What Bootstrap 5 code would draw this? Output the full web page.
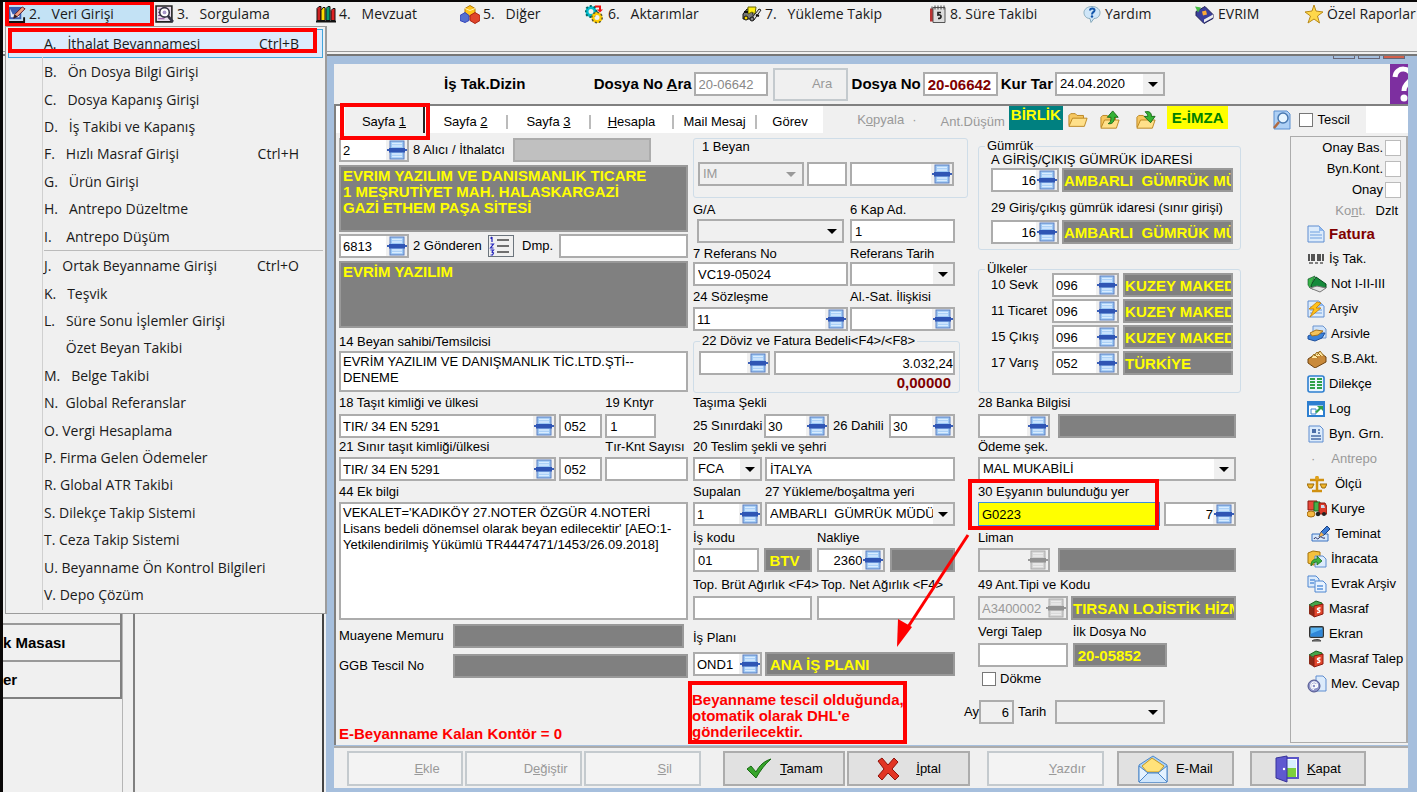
<!DOCTYPE html>
<html lang="tr">
<head>
<meta charset="utf-8">
<meta name="viewport" content="width=device-width, initial-scale=1">
<title>Beyanname Girişi</title>
<link href="https://cdn.jsdelivr.net/npm/bootstrap@5.3.0/dist/css/bootstrap.min.css" rel="stylesheet">
<style>
:root{--face:#f0f0f0;--line:#acacac;--dark:#808080;--frame:#a6bfdd;--mark:#f00}
body{font-family:"Liberation Sans",Arial,sans-serif;font-size:13px;line-height:16px;color:#000;background:var(--face);border-top:2px solid #0a0808;border-left:3px solid #0a0808}
svg{display:block;flex:none}
label,.cap{white-space:nowrap;line-height:16px;display:block}
b,.fw-bold{font-weight:700!important;font-size:15px!important}
button{font-size:13px;line-height:16px}

/* menu bar */
.mainmenu{height:50px;padding-left:3px;display:grid;grid-template-columns:147fr 161fr 144fr 125fr 157fr 187fr 153fr 113fr 109fr 115fr;align-items:start;border-bottom:1px solid #999;font-family:"Open Sans","Noto Sans",sans-serif;font-size:14px}
.mainmenu a{color:#1a1a1a;text-decoration:none;display:flex;gap:3px;align-items:center;height:24px;white-space:pre;padding-left:2px}
.mainmenu a.opened{background:#c3e2f5;outline:4px solid var(--mark);outline-offset:-3px;padding-left:3px}
.dropmenu{position:absolute;left:2px;top:24px;width:322px;height:588px;z-index:20;background:var(--face);border:1px solid #9c9c9c;border-right-width:2px;padding:2px 2px 4px;font-family:"Open Sans","Noto Sans",sans-serif;font-size:14px;display:flex;flex-direction:column}
.dropmenu::before{content:"";position:absolute;left:36px;top:30px;bottom:3px;border-left:1px solid #d0d0d0}
.dropmenu a{flex:1 1 0;display:flex;justify-content:space-between;align-items:center;padding:0 24px 0 36px;color:#1a1a1a;text-decoration:none;white-space:pre}
.dropmenu a.hot{background:#dcebfc;border:1px solid #42a5dc;padding:0 23px 0 35px}
.dropmenu hr{margin:0 0 1px 36px;border-top:1px solid #bbb;opacity:1}
.ring{position:absolute;border:4px solid var(--mark);pointer-events:none;z-index:5}
.ring-item{left:2px;top:1px;width:309px;height:25px}
.ring-tab{left:4px;top:-3px;width:90px;height:37px}
.ring-field{left:-10px;top:-5px;right:31%;height:51px}

/* work area */
.workarea{border-top:2px solid #777;margin-top:2px;background:var(--face)}
.backpane{width:321px;flex:none;border-right:2px solid #444}
.backlist{width:120px;border-right:3px solid var(--dark);border-bottom:2px solid var(--dark)}
.backlist .filler{height:567px}
.backlist div+div{height:37px;border-top:2px solid #999;padding-top:10px}
.backrail{width:13px;border-right:2px solid var(--dark);border-left:1px solid #b5b5b5;margin-left:-1px}
.childwin{background:var(--frame);padding:0 9px 4px 8px;min-width:0;margin-left:2px}
.titlestrip{height:8px;display:flex;justify-content:flex-end;gap:3px;padding-right:3px}
.titlestrip i{width:22px;height:3px;border:1px solid #667;border-top:0}
.titlestrip i:last-child{background:#d2604c}
.dochead{height:42px;background:var(--face);border-bottom:2px solid var(--dark);font-weight:700;font-size:15px}
.dochead label{padding-right:2px}
.dochead .lead-in{margin-left:110px}
.dochead .short{width:74px;color:#888}
.dochead .seek{width:75px;height:33px;border:2px solid #c4cace;color:#999;font-size:13px;margin:0 4px 0 5px}
.dochead .fileno{width:75px;color:#800000;margin-right:3px}
.dochead .ratedate{width:110px}
.dochead .restspace{max-width:225px}
.dochead .help{width:18px;height:40px;background:#7d2fa0;overflow:hidden;color:#fff}
.tabstrip{height:27px;background:#fff;border-left:2px solid var(--dark)}
.tabstrip .tabbtn{flex:none;border:0;background:none;border-right:2px solid #bbb;height:14px;margin-top:9px;padding:0;width:83px;line-height:14px}
.tabstrip .tabbtn.now{background:var(--face);height:27px;margin:0 0 0 9px;padding:4px 0 0;width:80px;border-right:2px solid #222;line-height:16px}
.tabstrip .tabbtn.last{width:66px;border:0}
.tools{background:var(--face);color:#999}
.tools .union{background:#008080;color:#ff0;height:24px;padding:1px 2px;margin-right:5px}
.tools .esign{background:#ff0;color:green;height:23px;padding:4px 5px;margin:0 45px 0 11px}
.tabrest{width:42px;flex:none}

/* fields */
.fld{display:flex;height:24px;min-width:0;background:#fff;border:2px solid var(--line);align-items:center}
.fld input{flex:1 1 0;min-width:0;width:0;border:0;background:none;padding:0 0 0 2px;height:20px;font-size:13px;line-height:16px;outline:0;color:#000}
.fld.num input{text-align:right;padding:0}
.fld button{border:0;background:var(--face);padding:0;width:21px;height:20px;display:flex;align-items:center;justify-content:center;flex:none}
.fld.off{background:var(--face)}.fld.off input{color:#999}.fld.off svg{filter:grayscale(1) opacity(.6)}
.plain{width:100%;min-width:0;height:24px;border:2px solid var(--line);border-radius:0;background:#fff;font-size:13px;line-height:16px;padding:0 3px;color:#000;outline:0;display:block}
textarea.plain{resize:none;overflow:hidden;padding:1px 2px}
.plain.party{height:67px}.plain.owner{height:41px}.plain.extra{height:118px}
.shade{background:#808080;border-color:#999;color:#ff0;font-weight:700;font-size:15px}
.silver{background:#c0c0c0}
select.plain{appearance:none;padding-right:20px;background:#fff url("data:image/svg+xml,%3Csvg xmlns='http://www.w3.org/2000/svg' width='20' height='20'%3E%3Crect width='20' height='20' fill='%23f0f0f0'/%3E%3Cpath d='M5 8h10l-5 5z'/%3E%3C/svg%3E") no-repeat right center}
select.plain.flat{background-color:var(--face)}
select.plain:disabled{color:#999;opacity:1;background:var(--face) url("data:image/svg+xml,%3Csvg xmlns='http://www.w3.org/2000/svg' width='20' height='20'%3E%3Cpath d='M4 8h10l-5 5z' fill='%23999'/%3E%3C/svg%3E") no-repeat right center}
.boxtick{appearance:none;width:14px;height:14px;border:1px solid #777;background:#fff;flex:none;margin:0}
.boxtick.big{width:16px;height:16px;border-color:#bbb}
.focusfld{background:#ff0;border:1px solid #3a8fe0}

/* form */
.formgrid{display:grid;grid-template-columns:minmax(0,354fr) minmax(0,285fr) minmax(0,312fr) minmax(0,118fr);padding:5px 0 0 3px;border-left:2px solid var(--dark);background:var(--face)}
.stackgrid{display:grid;align-content:start;align-items:start;position:relative;min-width:0}
.stack1{padding-right:5px;grid-template-rows:27px 69px 27px 73px 19px 42px 19px 25px 18px 27px 18px 122px 30px 26px 46px 18px}
.stack2{padding-right:10px;grid-template-rows:64px 17px 27px 16px 27px 18px 26px 62px 19px 25px 18px 27px 18px 28px 18px 29px 19px 34px 22px 29px 63px}
.stack3{padding-right:49px;grid-template-rows:123px 134px 19px 25px 18px 27px 18px 28px 18px 29px 19px 28px 19px 28px 29px 24px}
.stack1>:nth-child(6){margin-top:-2px}
.stackgrid>.line:nth-child(n+8){min-height:0}
.line{display:grid;min-width:0}
.line>*{min-width:0}
.line.mid{align-items:center}
.stack2>.line{padding-right:13px}.stack3>.line{padding-right:5px}
.g-buyer{grid-template-columns:70fr 104fr 138fr 37fr}
.g-sender{grid-template-columns:70fr 79fr 26fr 45fr 129fr}
.g-truck{grid-template-columns:218fr 43fr 83fr;column-gap:3px}
.g-side{grid-template-columns:114fr 235fr}
.g-half{grid-template-columns:155fr 105fr;column-gap:2px}
.g-mode{grid-template-columns:71fr 65fr 60fr 66fr}
.g-deliv{grid-template-columns:69fr 190fr;column-gap:3px}
.g-job{grid-template-columns:65fr 48fr 68fr 64fr;column-gap:5px}
.g-weight{grid-template-columns:119fr 138fr;column-gap:5px}
.g-bank{grid-template-columns:72fr 178fr;column-gap:8px}
.g-place{grid-template-columns:181fr 72fr;column-gap:4px}
.g-depot{grid-template-columns:90fr 165fr;column-gap:3px}
.g-tax{grid-template-columns:90fr 95fr 64fr;column-gap:5px}
.g-month{grid-template-columns:35fr 41fr 110fr 71fr;margin-left:1px}
.g-month .before{position:absolute;right:100%}
.group{border:1px solid #cfdde8;border-radius:3px;min-width:0;height:60px}
.group.offices{height:112px}.group.lands{height:132px}
.group legend{font-size:13px;line-height:16px;margin:0 0 0 6px;padding:0 2px;width:auto;float:none}
.officebody{padding:0 7px 0 12px;margin-top:-2px}
.g-decl{grid-template-columns:106fr 41fr 104fr;column-gap:3px;padding:7px 13px 0 4px;clear:both}
.g-money{grid-template-columns:71fr 181fr;column-gap:4px;padding:2px 0 0 5px}
.g-office{grid-template-columns:68fr 171fr;column-gap:3px}
.officebody .shade{padding-left:0}
.g-land{grid-template-columns:60fr 66fr 112fr;column-gap:0;row-gap:2px;margin-top:-4px;padding:0 7px 0 12px}
.g-land .shade{margin-left:4px;width:auto}
.money0{color:#800000}
.credit{color:var(--mark)}
.note{border:4px solid var(--mark);color:var(--mark);font-weight:700;font-size:15px;width:219px;margin-left:-5px;padding:7px 0 0;height:63px;position:relative;z-index:2;white-space:nowrap}
.arrow{position:absolute;left:-86px;top:392px;z-index:5;pointer-events:none}

/* right button column */
.sidelist{border:1px solid var(--line);border-right:2px solid var(--line);height:607px;margin-top:-2px;overflow:hidden}
.sidelist .tickrow{height:21px;display:flex;align-items:center;justify-content:flex-end;gap:2px;padding-right:5px}
.sidelist .cmd{height:25px;display:flex;align-items:center;gap:4px;border:0;background:none;padding:0 0 0 16px;white-space:nowrap;width:100%;text-align:left}
.dim{color:#999}.maroon{color:#800000}

/* bottom buttons */
.actions{height:42px;border-top:2px solid var(--line);background:var(--face);padding:3px 42px 2px 13px;margin-top:1px;display:grid;grid-template-columns:116fr 117fr 117fr 18fr 122fr 122fr 13fr 117fr 9fr 117fr 12fr 116fr;column-gap:2px}
.actions .act{min-width:0;border:2px solid var(--line);background:#e1e1e1;border-radius:0;padding:0 6px;display:flex;align-items:center;justify-content:center;gap:8px;font-size:13px;color:#000}
.actions .act:disabled{background:#f3f3f3;border-color:#c4cace;color:#999;padding-left:50px}
.actions .c5{grid-column:5}.actions .c8{grid-column:8}.actions .c10{grid-column:10}.actions .c12{grid-column:12}
</style>
</head>
<body class="min-vh-100 d-flex flex-column position-relative overflow-x-hidden">

<svg width="0" height="0" class="position-absolute" aria-hidden="true">
 <symbol id="pick" viewBox="0 0 20 20"><rect x="3" y="1" width="14" height="18" fill="#9cc8f5" stroke="#5c7fc0"/><path d="M5 3.500h10M5 6h10M5 14h10M5 16.500h10" stroke="#d9ecff" stroke-width="1.500"/><path d="M0 10h20" stroke="#3c60b8" stroke-width="2"/><rect x="2" y="8" width="16" height="4.500" fill="#2f55b4"/></symbol>
 <symbol id="list" viewBox="0 0 22 20"><path d="M8 4h12M8 10h12M8 16h12" stroke="#444" stroke-width="1.500"/><path d="M3 1v5M1.500 2.500L3 1M1.500 8h3l-3 4h3M1.500 14h3l-1.500 2 1.500 1-1 2h-2" fill="none" stroke="#22b" stroke-width="1.200"/></symbol>
 <symbol id="m-edit" viewBox="0 0 18 18"><path d="M0 1h13v13H0z" fill="#3a5fb0"/><path d="M1 3l3 6 7-2v5H2z" fill="#e8eefc"/><path d="M0 17h16v-5" stroke="#111" stroke-width="2" fill="none"/><path d="M5 13l1-4 8-8 3 2-8 8z" fill="#f0a080" stroke="#512" /><path d="M5 13l1-4 3 2z" fill="#222"/></symbol>
 <symbol id="m-find" viewBox="0 0 18 18"><path d="M1 1h15v15H1z" fill="#e8dcec" stroke="#222" stroke-width="1.500"/><path d="M3 4h3M3 7h2M3 10h3M3 13h6" stroke="#849"/><circle cx="9" cy="7" r="4.500" fill="#fff" stroke="#334" stroke-width="1.500"/><circle cx="9" cy="7" r="1.800" fill="#a9c"/><path d="M12 10l5 6" stroke="#334" stroke-width="2.500"/></symbol>
 <symbol id="m-books" viewBox="0 0 20 18"><path d="M1 3l2-2h2v14H1z" fill="#c22" stroke="#111"/><path d="M5 5l2-3h2v13H5z" fill="#fd0" stroke="#111"/><path d="M10 3l2-2h2v14h-4z" fill="#0a9a70" stroke="#111"/><path d="M15 5l2-2h2v12h-4z" fill="#d22" stroke="#111"/><path d="M0 16h20" stroke="#111" stroke-width="2"/></symbol>
 <symbol id="m-cubes" viewBox="0 0 20 18"><path d="M5 3l5-3 5 3v5l-5 3-5-3z" fill="#ffc31a" stroke="#b77a00"/><path d="M0 10l5-3 4 3v5l-4 2-5-2z" fill="#5570d0" stroke="#34b"/><path d="M10 10l5-3 5 3v5l-5 3-5-3z" fill="#e0452a" stroke="#a21"/><path d="M5 3l5 2 5-2" fill="none" stroke="#fff3a8"/></symbol>
 <symbol id="m-gear" viewBox="0 0 20 18"><circle cx="6" cy="6" r="4" fill="none" stroke="#0bc" stroke-width="3"/><circle cx="6" cy="6" r="5.500" fill="none" stroke="#066" stroke-width="2" stroke-dasharray="2 2"/><circle cx="12" cy="12" r="4" fill="none" stroke="#fc0" stroke-width="3"/><circle cx="12" cy="12" r="5.200" fill="none" stroke="#553" stroke-width="1.500" stroke-dasharray="2 2"/><path d="M10 1h5v4" fill="none" stroke="#e11" stroke-width="2"/><path d="M12 4h6l-3 3z" fill="#e11"/></symbol>
 <symbol id="m-truck" viewBox="0 0 20 18"><path d="M1 9l4-5h4l2 5 1 5H1z" fill="#777" stroke="#111"/><path d="M6 2h8l-1 7-3-2-4 2z" fill="#fe1" stroke="#660"/><path d="M9 14l8-10 2 1-7 10z" fill="#ddd" stroke="#222"/><circle cx="4" cy="13" r="2" fill="#fd0" stroke="#111"/><circle cx="10" cy="14" r="2" fill="#888" stroke="#111"/><path d="M2 7h4M14 10l3 1" stroke="#111" stroke-width="2"/></symbol>
 <symbol id="m-cal" viewBox="0 0 18 18"><path d="M1 3h4v13H1z" fill="#b33"/><path d="M4 2h12v15H4z" fill="#ddd" stroke="#555"/><path d="M3 1v3M6 0v4M9 0v4M12 0v4M15 0v4" stroke="#444"/><path d="M12 7H9v2.500c4-1 4 3.500 0 3.500" fill="none" stroke="#222" stroke-width="1.700"/></symbol>
 <symbol id="m-help" viewBox="0 0 20 18"><path d="M10 1c5 0 8 3 8 6s-2 6-6 6l-3 4-1-4C4 13 2 10 2 7s3-6 8-6z" fill="#cfe6f8" stroke="#8ab"/><path d="M8 5c0-3 5-2.500 4.500 0C12 7 10 6.500 10 9" fill="none" stroke="#15a" stroke-width="2"/><circle cx="10" cy="11" r="1.200" fill="#15a"/></symbol>
 <symbol id="m-book" viewBox="0 0 20 18"><path d="M1 6l9-5 8 8v4l-9 5-8-8z" fill="#3a3f9c" stroke="#225"/><path d="M9 14l9-5v3l-9 5z" fill="#eee"/><path d="M7 6l4-1 1 4-4 1z" fill="#fa3"/><path d="M0 1l6 1-3 5z" fill="#4b4"/></symbol>
 <symbol id="m-star" viewBox="0 0 20 20"><path d="M10 1l2 6 7 1-5.500 4 2 7-5.500-4-6 4 2.500-7L1 8l7-1z" fill="#ffd84a" stroke="#b98a18" stroke-linejoin="round"/></symbol>
 <symbol id="folder" viewBox="0 0 22 18"><path d="M1 15V4l2-2h5l2 2h7v3" fill="#f6c760" stroke="#b8821c"/><path d="M1 16L5 7h16l-3 9z" fill="#ffe08a" stroke="#b8821c"/></symbol>
 <symbol id="up" viewBox="0 0 22 22"><path d="M1 19V8l2-2h5l2 2h7v3" fill="#f6c760" stroke="#b8821c"/><path d="M1 20l4-9h16l-3 9z" fill="#ffe08a" stroke="#b8821c"/><path d="M9 15c3-1 3-4 3-7H8l6-7 6 7h-4c0 4-2 8-7 7z" fill="#35b335" stroke="#176817"/></symbol>
 <symbol id="into" viewBox="0 0 22 22"><path d="M1 19V8l2-2h5l2 2h7v3" fill="#f6c760" stroke="#b8821c"/><path d="M1 20l4-9h16l-3 9z" fill="#ffe08a" stroke="#b8821c"/><path d="M10 2c5-1 7 1 7 5h4l-5 7-7-7h4c0-2-1-3-3-5z" fill="#35b335" stroke="#176817"/></symbol>
 <symbol id="search" viewBox="0 0 18 20"><path d="M1 1h13l3 3v15H1z" fill="#aed0f5" stroke="#5a8fd0"/><circle cx="10" cy="8" r="5" fill="#e8f5ff" stroke="#4878b0" stroke-width="1.500"/><path d="M6 12l-5 6" stroke="#b06a40" stroke-width="2.500"/></symbol>
 <symbol id="s-doc" viewBox="0 0 18 18"><path d="M1 1h11l5 5v11H1z" fill="#dcebfb" stroke="#5f8dd0"/><path d="M12 1v5h5z" fill="#8fb8ee"/><path d="M3 7h10M3 10h12M3 13h12" stroke="#6f9fe0" stroke-width="1.200"/></symbol>
 <symbol id="s-bar" viewBox="0 0 18 18"><path d="M2 4v7M5 4v7M7 4v7M11 4v7M13 4v7M16 4v7" stroke="#111" stroke-width="1.400"/><path d="M2 13h4M8 13h3M13 13h3" stroke="#111"/></symbol>
 <symbol id="s-note" viewBox="0 0 20 18"><path d="M4 10L9 2l10 7v4l-8-1-6 2z" fill="#168a3c" stroke="#064a1c"/><path d="M1 4l7-3-5 12-2-3z" fill="#39b54a" stroke="#064a1c" stroke-width=".6"/><path d="M3 13l7-2 9 2-6 4z" fill="#e4e4e4" stroke="#777"/></symbol>
 <symbol id="s-bolt" viewBox="0 0 18 18"><use href="#s-doc"/><path d="M10 2L2 9h5l-4 8 11-9H9l5-5z" fill="#ffc21c" stroke="#c87c00" stroke-width=".8"/></symbol>
 <symbol id="s-arc" viewBox="0 0 20 18"><path d="M6 1h10l3 3v9H6z" fill="#cfe3fa" stroke="#6c95cf"/><path d="M1 11l6-3h11l-3 5-7 3-7-2z" fill="#3b82d8" stroke="#1e4f9c"/><path d="M3 8l6-3 7 1-5 4-6 1z" fill="#f5c45a" stroke="#a8731a"/></symbol>
 <symbol id="s-cards" viewBox="0 0 20 18"><path d="M1 9l11-7 7 5v5l-11 6-7-5z" fill="#c98a3a" stroke="#6e4210"/><path d="M4 8l3-4 4 4M7 6l3-4 4 4M10 5l3-4 4 5" fill="#ffe9a5" stroke="#9a6d1c"/></symbol>
 <symbol id="s-tab" viewBox="0 0 18 18"><rect x="1" y="1" width="16" height="16" rx="2" fill="#e9f5ff" stroke="#2d7fd0" stroke-width="1.600"/><path d="M3 4h5M3 7h5M3 10h5M3 13h5M10 4h5M10 7h5M10 10h5M10 13h5" stroke="#2fa04a" stroke-width="2"/></symbol>
 <symbol id="s-log" viewBox="0 0 18 18"><rect x="1" y="2" width="16" height="14" fill="#fff" stroke="#2d7fd0" stroke-width="2"/><path d="M1 4h16" stroke="#2d7fd0" stroke-width="3"/><path d="M4 9h5v5H4z" fill="none" stroke="#3a84d0"/><path d="M8 12l4-4-2-2h6v5l-2-2-4 4z" fill="#2fa04a"/></symbol>
 <symbol id="s-byn" viewBox="0 0 18 18"><path d="M2 1h11l3 3v13H2z" fill="#dcebfb" stroke="#5f8dd0"/><path d="M5 4h4v4H5z" fill="#4a6da8"/><path d="M11 5h2M11 8h2M4 11h10M4 14h10" stroke="#4a6da8" stroke-width="1.500"/></symbol>
 <symbol id="s-scale" viewBox="0 0 20 18"><path d="M10 1v14M3 5h14M5 16h10" stroke="#d09010" stroke-width="2.500"/><path d="M0 9h7l-2 4H2zM13 9h7l-2 4h-3z" fill="#f1b62c" stroke="#9b6a08"/><circle cx="10" cy="3" r="2" fill="#e0a21a"/></symbol>
 <symbol id="s-cour" viewBox="0 0 20 18"><path d="M1 1h9v9H1z" fill="#e8483a" stroke="#8c1a10"/><path d="M7 2h6v9H7z" fill="#46b04a" stroke="#1b6b20"/><path d="M12 3h6l2 4v7h-8z" fill="#db3a2a" stroke="#8c1a10"/><path d="M14 5h3l1 3h-4z" fill="#cde"/><circle cx="11" cy="14" r="2.200" fill="#222"/><circle cx="17" cy="14" r="2" fill="#222"/><ellipse cx="4" cy="14" rx="4" ry="3" fill="#f5b942" stroke="#a46a0c"/></symbol>
 <symbol id="s-sign" viewBox="0 0 20 18"><path d="M1 9h16v7H1z" fill="#d7e8fb" stroke="#3b73c0"/><path d="M3 14c2-4 3 2 5-1s3 1 6 0" fill="none" stroke="#225"/><path d="M8 12l2-5 6-6 3 3-6 6z" fill="#3c7bd4" stroke="#173f80"/><path d="M8 12l2-5 3 3z" fill="#f0b050"/></symbol>
 <symbol id="s-exp" viewBox="0 0 20 18"><path d="M1 3l5-2 7 1v12l-7 1-5-2z" fill="#f4c03c" stroke="#a5730c"/><path d="M8 6h8l3 3v8H8z" fill="#dcebfb" stroke="#5f8dd0"/><path d="M4 16c0-5 2-7 6-7V6l5 5-5 4v-3c-3 0-4 1-6 4z" fill="#3fb23f" stroke="#1b6b20" stroke-width=".8"/></symbol>
 <symbol id="s-copy" viewBox="0 0 20 18"><path d="M1 1h8l3 3v8H1z" fill="#dcebfb" stroke="#4f86d0"/><path d="M8 6h8l3 3v8H8z" fill="#e8f3ff" stroke="#4f86d0"/><path d="M3 5h5M3 8h4M10 11h6M10 14h6" stroke="#5b94dc" stroke-width="1.300"/></symbol>
 <symbol id="s-cost" viewBox="0 0 18 18"><path d="M2 5l7-4 6 2v2L8 8z" fill="#46a44a" stroke="#1c611e"/><path d="M2 5l5 3v9l-5-3z" fill="#8c2a18"/><path d="M7 6l9-2v10l-9 3z" fill="#e2462c" stroke="#8c1a10"/><path d="M13.500 8c-3-.5-4 1.500-2 2s2 3-1.500 2.500" fill="none" stroke="#fff" stroke-width="1.500"/></symbol>
 <symbol id="s-scr" viewBox="0 0 18 18"><rect x="2" y="1" width="15" height="12" rx="2" fill="#333"/><rect x="3.500" y="2.500" width="12" height="9" fill="#5ab4f2"/><path d="M3.500 9l12-5v7.500h-12z" fill="#2f86d8"/><path d="M5 16c2-2 8-2 9 0z" fill="#888" stroke="#444"/></symbol>
 <symbol id="s-at" viewBox="0 0 20 18"><path d="M9 1h7l3 3v12H9z" fill="#dcebfb" stroke="#5f8dd0"/><circle cx="7" cy="11" r="6" fill="#8f94c8" stroke="#4d528c"/><circle cx="7" cy="11" r="2" fill="none" stroke="#fff" stroke-width="1.300"/><path d="M9 9v3c2 2 2.500-4-1-5-5-1-6 7-1 7.500" fill="none" stroke="#fff" stroke-width="1.100"/></symbol>
 <symbol id="ok" viewBox="0 0 26 22"><path d="M1 11l4-3 5 6C13 8 18 3 25 1 19 6 14 13 10 20z" fill="#37a52b" stroke="#176a12"/></symbol>
 <symbol id="no" viewBox="0 0 24 24"><path d="M2 4l4-3 6 7 6-7 4 4-6 7 7 7-4 4-7-7-6 7-4-4 6-7z" fill="#e23524" stroke="#8e120a"/></symbol>
 <symbol id="mail" viewBox="0 0 30 28"><path d="M1 10L15 1l14 9v17H1z" fill="#a9d0f5" stroke="#4b86c8"/><path d="M4 11l10-8 12 8-5 6H9z" fill="#ffe27a" stroke="#c79a20"/><path d="M1 11l9 7h10l9-7v16H1z" fill="#e4f2ff" stroke="#4b86c8"/><path d="M1 27l9-9h10l9 9" fill="#cfe6fc" stroke="#4b86c8"/></symbol>
 <symbol id="door" viewBox="0 0 24 28"><rect x="9" y="3" width="14" height="20" fill="#fff" stroke="#5a55c8" stroke-width="2"/><path d="M11 13h10v9H11z" fill="#7ccf3c"/><path d="M11 5h10v8H11z" fill="#d8f0ff"/><path d="M1 3l11-2v26L1 23z" fill="#5f59d0" stroke="#37329a"/><circle cx="9" cy="14" r="1.200" fill="#fff"/></symbol>
</svg>

<nav class="mainmenu" aria-label="Ana menü">
 <a class="opened" href="#"><svg width="17" height="17"><use href="#m-edit"/></svg>2.   Veri Girişi</a>
 <a href="#"><svg width="19" height="19"><use href="#m-find"/></svg>3.   Sorgulama</a>
 <a href="#"><svg width="20" height="19"><use href="#m-books"/></svg>4.   Mevzuat</a>
 <a href="#"><svg width="20" height="19"><use href="#m-cubes"/></svg>5.   Diğer</a>
 <a href="#"><svg width="20" height="19"><use href="#m-gear"/></svg>6.   Aktarımlar</a>
 <a href="#"><svg width="20" height="18"><use href="#m-truck"/></svg>7.   Yükleme Takip</a>
 <a href="#"><svg width="18" height="19"><use href="#m-cal"/></svg>8. Süre Takibi</a>
 <a href="#"><svg width="20" height="19"><use href="#m-help"/></svg>Yardım</a>
 <a href="#"><svg width="20" height="19"><use href="#m-book"/></svg>EVRIM</a>
 <a href="#"><svg width="20" height="20"><use href="#m-star"/></svg>Özel Raporlar</a>
</nav>

<nav class="dropmenu" aria-label="Veri Girişi">
 <a class="hot" href="#"><span>A.   İthalat Beyannamesi</span><span>Ctrl+B</span></a>
 <a href="#">B.   Ön Dosya Bilgi Girişi</a>
 <a href="#">C.   Dosya Kapanış Girişi</a>
 <a href="#">D.   İş Takibi ve Kapanış</a>
 <a href="#"><span>F.   Hızlı Masraf Girişi</span><span>Ctrl+H</span></a>
 <a href="#">G.   Ürün Girişi</a>
 <a href="#">H.   Antrepo Düzeltme</a>
 <a href="#">I.    Antrepo Düşüm</a>
 <hr>
 <a href="#"><span>J.   Ortak Beyanname Girişi</span><span>Ctrl+O</span></a>
 <a href="#">K.   Teşvik</a>
 <a href="#">L.   Süre Sonu İşlemler Girişi</a>
 <a href="#">      Özet Beyan Takibi</a>
 <a href="#">M.   Belge Takibi</a>
 <a href="#">N.  Global Referanslar</a>
 <a href="#">O. Vergi Hesaplama</a>
 <a href="#">P. Firma Gelen Ödemeler</a>
 <a href="#">R. Global ATR Takibi</a>
 <a href="#">S. Dilekçe Takip Sistemi</a>
 <a href="#">T. Ceza Takip Sistemi</a>
 <a href="#">U. Beyanname Ön Kontrol Bilgileri</a>
 <a href="#">V. Depo Çözüm</a>
 <span class="ring ring-item"></span>
</nav>

<div class="workarea d-flex flex-fill">
 <aside class="backpane d-flex">
  <div><div class="backlist fw-bold"><div class="filler"></div><div>k Masası</div><div>er</div></div></div>
  <div class="backrail"></div>
 </aside>

 <main class="childwin d-flex flex-column flex-fill">
  <div class="titlestrip"><i></i><i></i><i></i></div>

  <header class="dochead d-flex align-items-center">
   <span class="cap lead-in">İş Tak.Dizin</span>
   <label for="ara" class="ms-auto">Dosya No <u>A</u>ra</label>
   <input id="ara" class="plain short flex-shrink-0" value="20-06642">
   <button class="btn seek rounded-0 p-0 ps-4 flex-shrink-0">Ara</button>
   <label for="dno">Dosya No</label>
   <input id="dno" class="plain fileno flex-shrink-0 fw-bold" value="20-06642">
   <label for="kur">Kur Tar</label>
   <select id="kur" class="plain ratedate flex-shrink-0"><option>24.04.2020</option></select>
   <span class="flex-fill restspace"></span>
   <span class="help align-self-stretch"><svg width="24" height="40" viewBox="0 0 24 40"><path d="M5 13C6 2 22 3 21 13c0 6-7 6-7 14" fill="none" stroke="#fff" stroke-width="5"/><circle cx="14" cy="34" r="3.500" fill="#fff"/></svg></span>
  </header>

  <div class="tabstrip d-flex position-relative">
   <button class="tabbtn now">Sayfa <u>1</u></button>
   <button class="tabbtn">Sayfa <u>2</u></button>
   <button class="tabbtn">Sayfa <u>3</u></button>
   <button class="tabbtn"><u>H</u>esapla</button>
   <button class="tabbtn">Mail Mesaj</button>
   <button class="tabbtn last">Görev</button>
   <div class="tools d-flex flex-fill align-items-center">
    <span class="ms-auto me-2">K<u>o</u>pyala</span><span class="me-4">·</span>
    <span class="pt-1 me-1">Ant.Düşüm</span>
    <b class="union align-self-start">BİRLİK</b>
    <svg class="me-2" width="20" height="18"><use href="#folder"/></svg>
    <svg class="ms-1 me-3" width="20" height="22"><use href="#up"/></svg>
    <svg width="20" height="22"><use href="#into"/></svg>
    <b class="esign align-self-start">E-İMZA</b>
    <svg class="me-2" width="18" height="20"><use href="#search"/></svg>
    <input id="tescil" type="checkbox" class="boxtick me-1"><label for="tescil" class="text-black me-2 pe-2">Tescil</label>
   </div>
   <span class="tabrest"></span>
   <span class="ring ring-tab"></span>
  </div>

  <form class="formgrid flex-fill">
   <section class="stackgrid stack1">
    <div class="line g-buyer mid">
     <div class="fld"><input id="f8" value="2"><button type="button" aria-label="Seç"><svg width="20" height="20"><use href="#pick"/></svg></button></div>
     <label for="f8" class="ps-1">8 Alıcı / İthalatcı</label><input class="plain silver" aria-label="Alıcı kodu">
    </div>
    <textarea class="plain shade party" aria-label="Alıcı" readonly>EVRIM YAZILIM VE DANISMANLIK TICARE
1 MEŞRUTİYET MAH. HALASKARGAZİ
GAZİ ETHEM PAŞA SİTESİ</textarea>
    <div class="line g-sender mid">
     <div class="fld"><input id="f2" value="6813"><button type="button" aria-label="Seç"><svg width="20" height="20"><use href="#pick"/></svg></button></div>
     <label for="f2" class="ps-1">2 Gönderen</label>
     <button type="button" class="border border-secondary p-0 bg-transparent" aria-label="Liste"><svg width="22" height="20"><use href="#list"/></svg></button>
     <label for="dmp" class="ps-2">Dmp.</label><input id="dmp" class="plain">
    </div>
    <textarea class="plain shade party" aria-label="Gönderen" readonly>EVRİM YAZILIM</textarea>
    <label for="f14">14 Beyan sahibi/Temsilcisi</label>
    <textarea id="f14" class="plain owner">EVRİM YAZILIM VE DANIŞMANLIK TİC.LTD.ŞTİ--
DENEME</textarea>
    <div class="line g-truck"><label for="f18">18 Taşıt kimliği ve ülkesi</label><span></span><label for="f19">19 Kntyr</label></div>
    <div class="line g-truck">
     <div class="fld"><input id="f18" value="TIR/ 34 EN 5291"><button type="button" aria-label="Seç"><svg width="20" height="20"><use href="#pick"/></svg></button></div>
     <input class="plain" value="052" aria-label="Ülke"><div class="pe-4"><div class="pe-2"><input id="f19" class="plain" value="1"></div></div>
    </div>
    <div class="line g-truck"><label for="f21">21 Sınır taşıt kimliği/ülkesi</label><span></span><label for="tir">Tır-Knt Sayısı</label></div>
    <div class="line g-truck">
     <div class="fld"><input id="f21" value="TIR/ 34 EN 5291"><button type="button" aria-label="Seç"><svg width="20" height="20"><use href="#pick"/></svg></button></div>
     <input class="plain" value="052" aria-label="Ülke"><input id="tir" class="plain">
    </div>
    <label for="f44">44 Ek bilgi</label>
    <textarea id="f44" class="plain extra">VEKALET='KADIKÖY 27.NOTER ÖZGÜR 4.NOTERİ
Lisans bedeli dönemsel olarak beyan edilecektir' [AEO:1-
Yetkilendirilmiş Yükümlü TR4447471/1453/26.09.2018]</textarea>
    <div class="line g-side mid"><label for="mua">Muayene Memuru</label><div class="pe-1"><input id="mua" class="plain shade" readonly></div></div>
    <div class="line g-side mid"><label for="ggb">GGB Tescil No</label><input id="ggb" class="plain shade" readonly></div>
    <span></span>
    <b class="text-nowrap credit">E-Beyanname Kalan Kontör = 0</b>
   </section>

   <section class="stackgrid stack2">
    <fieldset class="group"><legend class="float-start">1 Beyan</legend>
     <div class="line g-decl"><select class="plain" disabled aria-label="Beyan türü"><option>IM</option></select><input class="plain" aria-label="Beyan 2">
      <div class="fld"><input aria-label="Beyan 3"><button type="button" aria-label="Seç"><svg width="20" height="20"><use href="#pick"/></svg></button></div></div>
    </fieldset>
    <div class="line g-half"><label for="ga">G/A</label><label for="f6">6 Kap Ad.</label></div>
    <div class="line g-half"><div class="ps-1 pe-1"><select id="ga" class="plain flat"><option></option></select></div><input id="f6" class="plain" value="1"></div>
    <div class="line g-half"><label for="f7">7 Referans No</label><label for="rt">Referans Tarih</label></div>
    <div class="line g-half"><input id="f7" class="plain" value="VC19-05024"><select id="rt" class="plain"><option></option></select></div>
    <div class="line g-half"><label for="f24">24 Sözleşme</label><label for="als">Al.-Sat. İlişkisi</label></div>
    <div class="line g-half"><div class="fld"><input id="f24" value="11"><button type="button" aria-label="Seç"><svg width="20" height="20"><use href="#pick"/></svg></button></div><div class="fld"><input id="als"><button type="button" aria-label="Seç"><svg width="20" height="20"><use href="#pick"/></svg></button></div></div>
    <fieldset class="group me-2"><legend>22 Döviz ve Fatura Bedeli&lt;F4&gt;/&lt;F8&gt;</legend>
     <div class="line g-money pe-1"><div class="fld"><input aria-label="Döviz"><button type="button" aria-label="Seç"><svg width="20" height="20"><use href="#pick"/></svg></button></div><input class="plain text-end p-0" value="3.032,24" aria-label="Fatura bedeli"></div>
     <b class="d-block text-end pe-2 money0">0,00000</b>
    </fieldset>
    <span class="cap">Taşıma Şekli</span>
    <div class="line g-mode mid"><label for="f25">25 Sınırdaki</label><div class="fld"><input id="f25" value="30"><button type="button" aria-label="Seç"><svg width="20" height="20"><use href="#pick"/></svg></button></div><label for="f26" class="ps-1">26 Dahili</label><div class="fld"><input id="f26" value="30"><button type="button" aria-label="Seç"><svg width="20" height="20"><use href="#pick"/></svg></button></div></div>
    <label for="f20">20 Teslim şekli ve şehri</label>
    <div class="line g-deliv"><select id="f20" class="plain"><option>FCA</option></select><input class="plain" value="İTALYA" aria-label="Teslim şehri"></div>
    <div class="line g-deliv"><label for="sup">Supalan</label><label for="f27">27 Yükleme/boşaltma yeri</label></div>
    <div class="line g-deliv"><div class="fld"><input id="sup" value="1"><button type="button" aria-label="Seç"><svg width="20" height="20"><use href="#pick"/></svg></button></div><select id="f27" class="plain"><option>AMBARLI&nbsp; GÜMRÜK MÜDÜRLÜĞÜ</option></select></div>
    <div class="line g-job"><label for="isk">İş kodu</label><span></span><label for="nak">Nakliye</label></div>
    <div class="line g-job"><input id="isk" class="plain" value="01"><input class="plain shade px-1" value="BTV" readonly aria-label="İş kodu adı"><div class="fld num"><input id="nak" value="2360"><button type="button" aria-label="Seç"><svg width="20" height="20"><use href="#pick"/></svg></button></div><input class="plain shade" readonly aria-label="Nakliye adı"></div>
    <div class="line g-weight"><label for="brut">Top. Brüt Ağırlık &lt;F4&gt;</label><label for="net" class="ps-1">Top. Net Ağırlık &lt;F4&gt;</label></div>
    <div class="line g-weight"><input id="brut" class="plain"><input id="net" class="plain"></div>
    <label for="plan">İş Planı</label>
    <div class="line g-deliv"><div class="fld"><input id="plan" value="OND1"><button type="button" aria-label="Seç"><svg width="20" height="20"><use href="#pick"/></svg></button></div><input class="plain shade" value="ANA İŞ PLANI" readonly aria-label="İş planı adı"></div>
    <div class="note">Beyanname tescil olduğunda,<br>otomatik olarak DHL'e<br>gönderilecektir.</div>
   </section>

   <section class="stackgrid stack3">
    <fieldset class="group offices"><legend>Gümrük</legend>
     <div class="officebody">
      <label for="fa">A GİRİŞ/ÇIKIŞ GÜMRÜK İDARESİ</label>
      <div class="line g-office"><div class="fld num"><input id="fa" value="16"><button type="button" aria-label="Seç"><svg width="20" height="20"><use href="#pick"/></svg></button></div><input class="plain shade pe-0" value="AMBARLI&nbsp; GÜMRÜK MÜDÜRLÜĞÜ" readonly aria-label="Giriş idaresi"></div>
      <label for="f29" class="mt-2">29 Giriş/çıkış gümrük idaresi (sınır girişi)</label>
      <div class="line g-office mt-1"><div class="fld num"><input id="f29" value="16"><button type="button" aria-label="Seç"><svg width="20" height="20"><use href="#pick"/></svg></button></div><input class="plain shade pe-0" value="AMBARLI&nbsp; GÜMRÜK MÜDÜRLÜĞÜ" readonly aria-label="Sınır idaresi"></div>
     </div>
    </fieldset>
    <fieldset class="group lands"><legend>Ülkeler</legend>
     <div class="line g-land mid">
      <label for="u10">10 Sevk</label><div class="fld"><input id="u10" value="096"><button type="button" aria-label="Seç"><svg width="20" height="20"><use href="#pick"/></svg></button></div><input class="plain shade px-0" value="KUZEY MAKEDONYA" readonly aria-label="Sevk ülkesi">
      <label for="u11">11 Ticaret</label><div class="fld"><input id="u11" value="096"><button type="button" aria-label="Seç"><svg width="20" height="20"><use href="#pick"/></svg></button></div><input class="plain shade px-0" value="KUZEY MAKEDONYA" readonly aria-label="Ticaret ülkesi">
      <label for="u15">15 Çıkış</label><div class="fld"><input id="u15" value="096"><button type="button" aria-label="Seç"><svg width="20" height="20"><use href="#pick"/></svg></button></div><input class="plain shade px-0" value="KUZEY MAKEDONYA" readonly aria-label="Çıkış ülkesi">
      <label for="u17">17 Varış</label><div class="fld"><input id="u17" value="052"><button type="button" aria-label="Seç"><svg width="20" height="20"><use href="#pick"/></svg></button></div><input class="plain shade px-0" value="TÜRKİYE" readonly aria-label="Varış ülkesi">
     </div>
    </fieldset>
    <label for="f28">28 Banka Bilgisi</label>
    <div class="line g-bank"><div class="fld"><input id="f28"><button type="button" aria-label="Seç"><svg width="20" height="20"><use href="#pick"/></svg></button></div><input class="plain shade" readonly aria-label="Banka adı"></div>
    <label for="ode">Ödeme şek.</label>
    <div class="line"><select id="ode" class="plain"><option>MAL MUKABİLİ</option></select></div>
    <div class="position-relative"><label for="f30">30 Eşyanın bulunduğu yer</label><span class="ring ring-field"></span></div>
    <div class="line g-place"><input id="f30" class="plain focusfld" value="G0223"><div class="fld num"><input value="7" aria-label="Yer kodu"><button type="button" aria-label="Seç"><svg width="20" height="20"><use href="#pick"/></svg></button></div></div>
    <label for="lim">Liman</label>
    <div class="line g-bank"><div class="fld off"><input id="lim" disabled><button type="button" aria-label="Seç" disabled><svg width="20" height="20"><use href="#pick"/></svg></button></div><input class="plain shade" readonly aria-label="Liman adı"></div>
    <label for="f49">49 Ant.Tipi ve Kodu</label>
    <div class="line g-depot"><div class="fld off"><input id="f49" value="A3400002" disabled><button type="button" aria-label="Seç" disabled><svg width="20" height="20"><use href="#pick"/></svg></button></div><input class="plain shade px-0" value="TIRSAN LOJİSTİK HİZMETLERİ" readonly aria-label="Antrepo adı"></div>
    <div class="line g-tax"><label for="ver">Vergi Talep</label><label for="ilk">İlk Dosya No</label></div>
    <div class="line g-tax"><input id="ver" class="plain"><input id="ilk" class="plain shade" value="20-05852" readonly></div>
    <div class="d-flex align-items-center"><input id="dok" type="checkbox" class="boxtick ms-1 me-1"><label for="dok">Dökme</label></div>
    <div class="line g-month mid position-relative"><label for="ay" class="before">Ay</label><input id="ay" class="plain text-end bg-transparent" value="6"><label for="tar" class="ps-1">Tarih</label><select id="tar" class="plain flat"><option></option></select></div>
    <svg class="arrow" width="80" height="122"><path d="M76 5L14 100" stroke="red" stroke-width="3"/><path d="M5 117l1-28 14 8z" fill="red"/></svg>
   </section>

   <aside class="sidelist">
    <div class="tickrow"><label for="ob">Onay Bas.</label><input id="ob" type="checkbox" class="boxtick big"></div>
    <div class="tickrow"><label for="bk">Byn.Kont.</label><input id="bk" type="checkbox" class="boxtick big"></div>
    <div class="tickrow"><label for="on">Onay</label><input id="on" type="checkbox" class="boxtick big"></div>
    <div class="tickrow pe-2"><span class="dim">Ko<u>n</u>t.</span><span class="ps-2">Dzlt</span></div>
    <button type="button" class="cmd fw-bold maroon"><svg width="18" height="18"><use href="#s-doc"/></svg>Fatura</button>
    <button type="button" class="cmd"><svg width="18" height="18"><use href="#s-bar"/></svg>İş Tak.</button>
    <button type="button" class="cmd"><svg width="20" height="18"><use href="#s-note"/></svg>Not I-II-III</button>
    <button type="button" class="cmd"><svg width="18" height="18"><use href="#s-bolt"/></svg>Arşiv</button>
    <button type="button" class="cmd"><svg width="20" height="18"><use href="#s-arc"/></svg>Arsivle</button>
    <button type="button" class="cmd"><svg width="20" height="18"><use href="#s-cards"/></svg>S.B.Akt.</button>
    <button type="button" class="cmd"><svg width="18" height="18"><use href="#s-tab"/></svg>Dilekçe</button>
    <button type="button" class="cmd"><svg width="18" height="18"><use href="#s-log"/></svg>Log</button>
    <button type="button" class="cmd"><svg width="18" height="18"><use href="#s-byn"/></svg>Byn. Grn.</button>
    <button type="button" class="cmd dim"><span class="ps-1 pe-2 me-1">·</span>Antrepo</button>
    <button type="button" class="cmd"><svg class="me-1" width="20" height="18"><use href="#s-scale"/></svg> Ölçü</button>
    <button type="button" class="cmd"><svg width="20" height="18"><use href="#s-cour"/></svg>Kurye</button>
    <button type="button" class="cmd ps-3"><svg class="ms-1" width="20" height="18"><use href="#s-sign"/></svg>Teminat</button>
    <button type="button" class="cmd"><svg width="20" height="18"><use href="#s-exp"/></svg>İhracata</button>
    <button type="button" class="cmd"><svg width="20" height="18"><use href="#s-copy"/></svg>Evrak Arşiv</button>
    <button type="button" class="cmd"><svg width="18" height="18"><use href="#s-cost"/></svg>Masraf</button>
    <button type="button" class="cmd"><svg width="18" height="18"><use href="#s-scr"/></svg>Ekran</button>
    <button type="button" class="cmd"><svg width="18" height="18"><use href="#s-cost"/></svg>Masraf Talep</button>
    <button type="button" class="cmd"><svg width="20" height="18"><use href="#s-at"/></svg>Mev. Cevap</button>
   </aside>
  </form>

  <footer class="actions">
   <button class="act" disabled><span><u>E</u>kle</span></button>
   <button class="act" disabled><span>D<u>e</u>ğiştir</span></button>
   <button class="act" disabled><span><u>S</u>il</span></button>
   <button class="act c5"><svg width="26" height="22"><use href="#ok"/></svg><span><u>T</u>amam</span></button>
   <button class="act"><svg class="me-2" width="24" height="24"><use href="#no"/></svg><span><u>İ</u>ptal</span></button>
   <button class="act c8" disabled><span><u>Y</u>azdır</span></button>
   <button class="act c10"><svg width="30" height="28"><use href="#mail"/></svg>E-Mail</button>
   <button class="act c12"><svg width="24" height="28"><use href="#door"/></svg><span><u>K</u>apat</span></button>
  </footer>
 </main>
</div>
<script src="https://cdn.jsdelivr.net/npm/bootstrap@5.3.0/dist/js/bootstrap.bundle.min.js"></script>
</body>
</html>
